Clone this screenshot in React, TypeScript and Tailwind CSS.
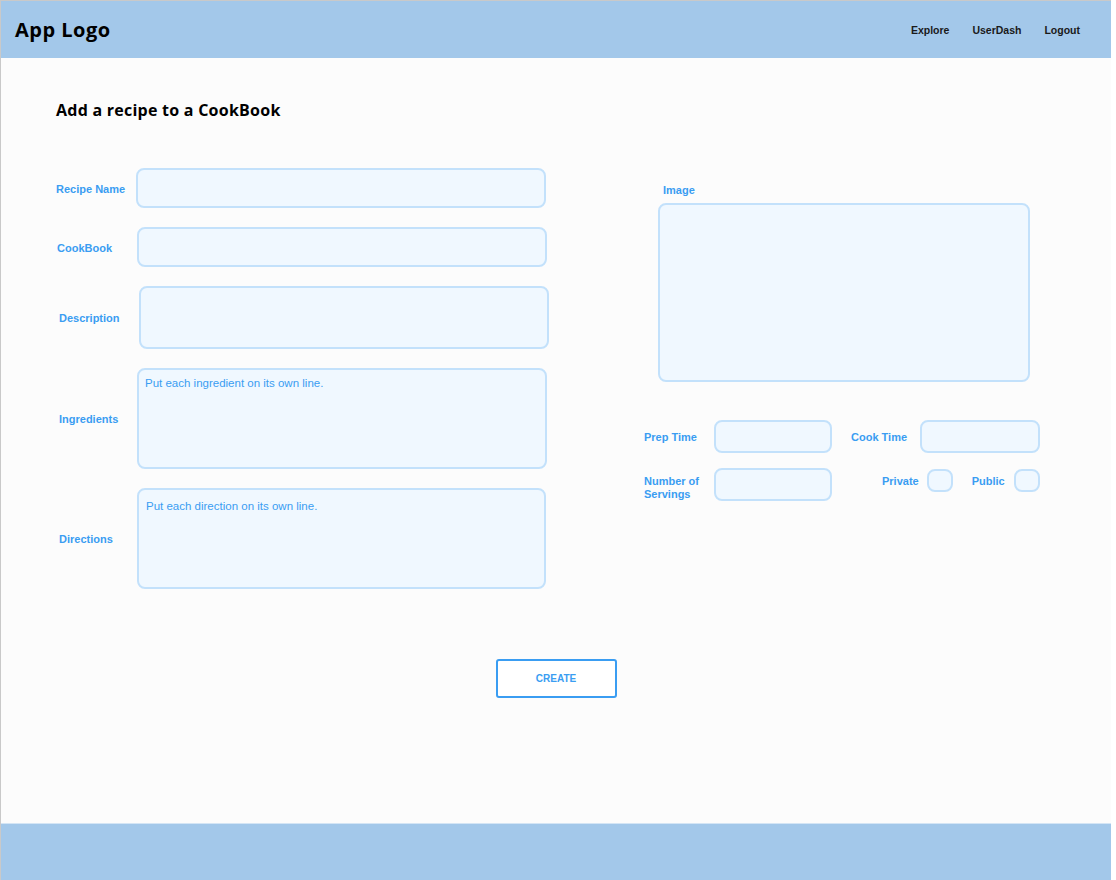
const label = "font-['Liberation_Sans',Arial,sans-serif] text-[11px] font-bold text-[#3a9df2] leading-[13px]"
const field =
  "bg-[#f0f8ff] border-2 border-[#c3e1fb] rounded-[8px] outline-none font-['Liberation_Sans',Arial,sans-serif] text-[11.5px] text-[#3a9df2] placeholder:text-[#3a9df2] resize-none"

function Header() {
  return (
    <header className="h-[57px] bg-[#a3c8ea] flex items-center justify-between pl-[14px] pr-[31px]">
      <div className="font-['Open_Sans',sans-serif] text-[20px] font-bold text-black tracking-[0.5px]">App Logo</div>
      <nav className="flex gap-[23px] pt-[2px] font-['Liberation_Sans',Arial,sans-serif] text-[10.5px] font-bold text-[#1a1a1a]">
        <a>Explore</a>
        <a>UserDash</a>
        <a>Logout</a>
      </nav>
    </header>
  )
}

function Row({ name, children, shift = "" }: { name: string; children: React.ReactNode; shift?: string }) {
  return (
    <div className="flex items-center">
      <div className={`w-[80px] shrink-0 pt-[2px] ${label} ${shift}`}>{name}</div>
      {children}
    </div>
  )
}

export default function App() {
  return (
    <div className="w-[1116px] h-[880px] bg-white">
      <div className="w-[1111px] h-[880px] flex flex-col border-t border-l border-[#c9c9c9] bg-[#fcfcfc]">
        <Header />

        {/* Content */}
        <main className="flex-1 pt-[42px] pl-[55px]">
          <h1 className="font-['Open_Sans',sans-serif] text-[16px] leading-[20px] font-bold text-black tracking-[0.25px]">
            Add a recipe to a CookBook
          </h1>

          <div className="flex mt-[48px]">
            {/* left column */}
            <div className="flex flex-col gap-[19px] w-[494px]">
              <Row name="Recipe Name">
                <input className={`${field} w-[410px] h-[40px] px-[8px]`} />
              </Row>
              <Row name="CookBook" shift="pl-[1px]">
                <input className={`${field} ml-[1px] w-[410px] h-[40px] px-[8px]`} />
              </Row>
              <Row name="Description" shift="pl-[3px]">
                <textarea className={`${field} ml-[3px] w-[410px] h-[63px] px-[8px] py-[6px]`} />
              </Row>
              <Row name="Ingredients" shift="pl-[3px]">
                <textarea
                  className={`${field} ml-[1px] w-[410px] h-[101px] px-[6px] py-[5px]`}
                  placeholder="Put each ingredient on its own line."
                />
              </Row>
              <Row name="Directions" shift="pl-[3px]">
                <textarea
                  className={`${field} ml-[1px] w-[409px] h-[101px] px-[7px] py-[8px]`}
                  placeholder="Put each direction on its own line."
                />
              </Row>
            </div>

            {/* right column */}
            <div className="ml-[94px] mt-[16px] flex flex-col w-[396px]">
              <div className={`${label} ml-[19px]`}>Image</div>
              <div className={`${field} ml-[14px] mt-[6px] w-[372px] h-[179px]`} />

              <div className="mt-[38px] flex items-center">
                <div className={`${label} w-[70px] pt-[2px]`}>Prep Time</div>
                <input className={`${field} w-[118px] h-[33px] px-[6px]`} />
                <div className={`${label} ml-[19px] w-[69px] pt-[2px]`}>Cook Time</div>
                <input className={`${field} w-[120px] h-[33px] px-[6px]`} />
              </div>

              <div className="mt-[15px] flex items-start">
                <div className={`${label} w-[70px] pt-[7px]`}>
                  Number of
                  <br />
                  Servings
                </div>
                <input className={`${field} w-[118px] h-[33px] px-[6px]`} />
                <div className="flex items-center ml-[50px] mt-[1px]">
                  <span className={`${label} pt-[1px]`}>Private</span>
                  <div className={`${field} ml-[8px] w-[26px] h-[23px]`} />
                  <span className={`${label} ml-[19px] pt-[1px]`}>Public</span>
                  <div className={`${field} ml-[9px] w-[26px] h-[23px]`} />
                </div>
              </div>
            </div>
          </div>

          <div className="flex justify-center mt-[70px] pr-[55px]">
            <button className="w-[121px] h-[39px] border-2 border-[#3a9df2] rounded-[3px] bg-white font-['Liberation_Sans',Arial,sans-serif] text-[10px] font-bold text-[#3a9df2]">
              CREATE
            </button>
          </div>
        </main>

        {/* Footer */}
        <footer className="h-[57px] bg-[#a3c8ea] border-t border-[#d4e5f5]" />
      </div>
    </div>
  )
}
